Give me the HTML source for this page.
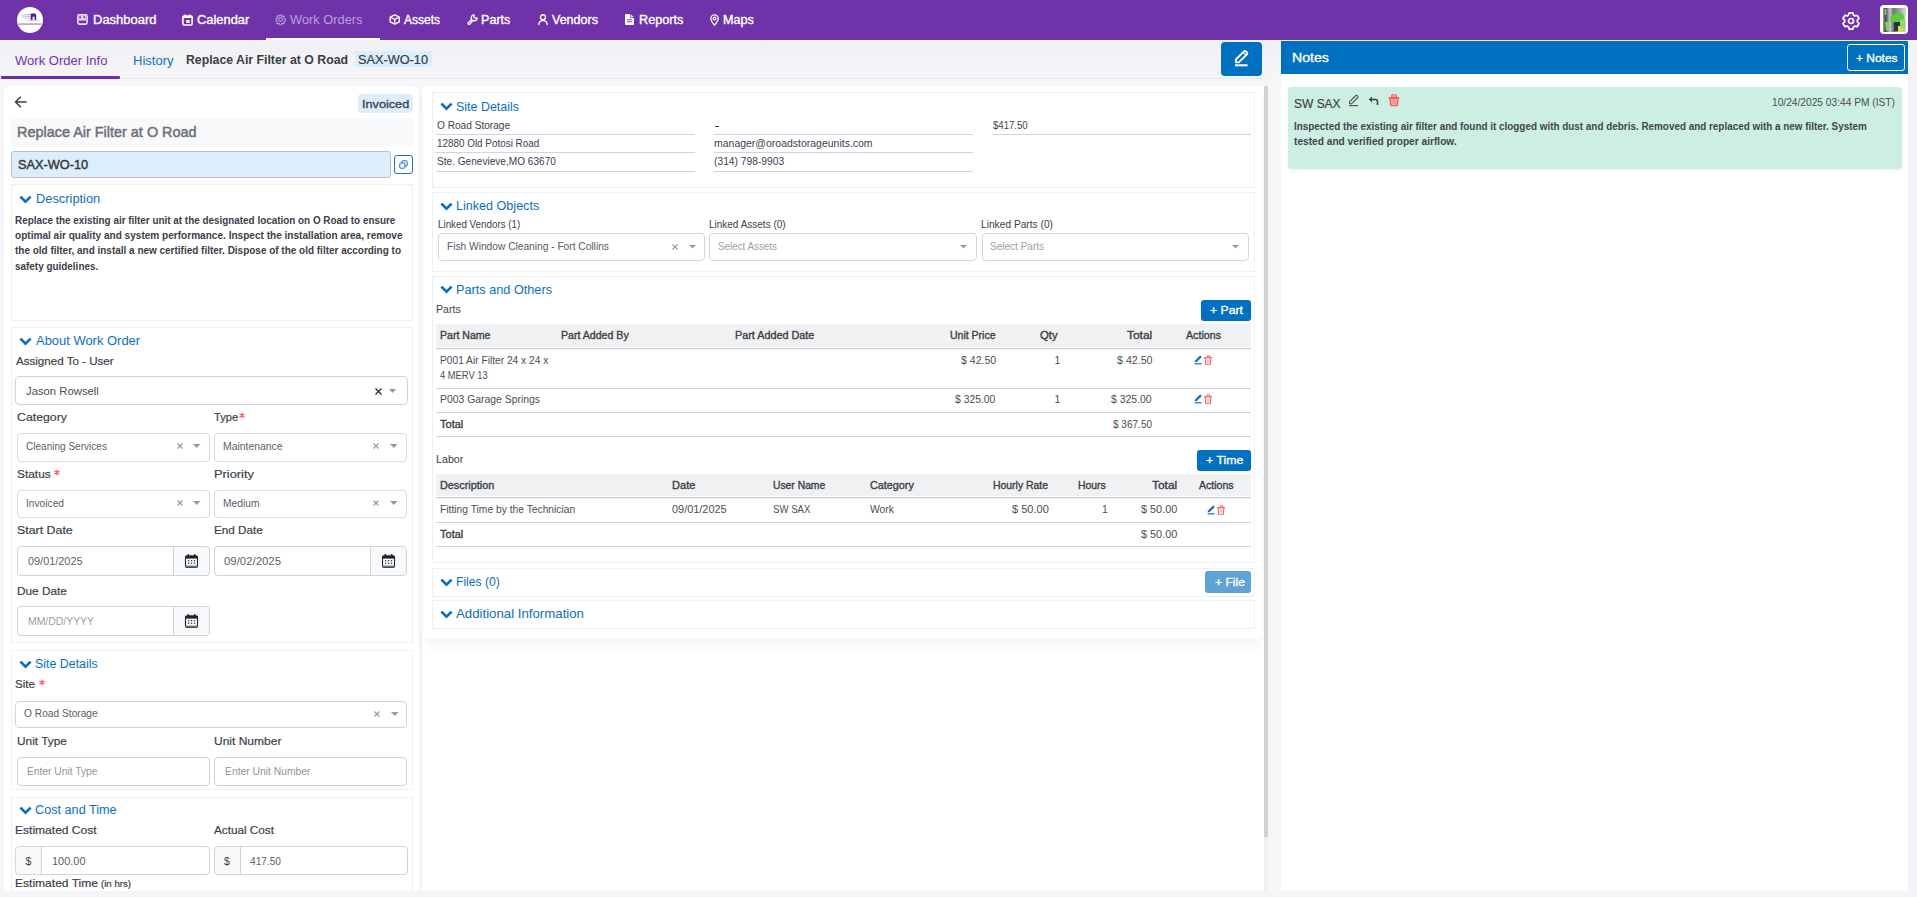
<!DOCTYPE html><html><head><meta charset="utf-8"><style>html,body{margin:0;padding:0;width:1917px;height:897px;overflow:hidden;}body{position:relative;background:#f4f4f8;font-family:"Liberation Sans",sans-serif;}svg{position:absolute;overflow:visible}</style></head><body><div style="position:absolute;left:0px;top:0px;width:1917px;height:40px;background:#6f32a9"></div>
<div style="position:absolute;left:0px;top:40px;width:1281px;height:851px;background:linear-gradient(#f0f0f4,#f6f6f9 40px,#f6f6f9)"></div>
<div style="position:absolute;left:120px;top:78px;width:1148px;height:1px;background:#e6ebf1"></div>
<div style="position:absolute;left:1px;top:76px;width:119px;height:3px;background:#6a2fb0;border-radius:1px"></div>
<div style="position:absolute;left:266px;top:38px;width:114px;height:2px;background:#ffffff"></div>
<div style="position:absolute;left:4px;top:86px;width:415px;height:805px;background:#fff;border-radius:6px 6px 0 0;box-shadow:0 0 2px rgba(0,0,0,0.03)"></div>
<div style="position:absolute;left:422px;top:86px;width:842px;height:805px;background:#fff"></div>
<div style="position:absolute;left:424px;top:86px;width:838px;height:553px;background:#fff;border-radius:0 0 4px 4px;box-shadow:0 8px 14px rgba(0,0,0,0.045)"></div>
<div style="position:absolute;left:1264px;top:86px;width:4px;height:805px;background:#f0f0f0"></div>
<div style="position:absolute;left:1264px;top:86px;width:4px;height:751px;background:#d1d1d1"></div>
<div style="position:absolute;left:1281px;top:41px;width:627px;height:850px;background:#fff"></div>
<div style="position:absolute;left:1281px;top:41px;width:627px;height:33px;background:#0070c0"></div>
<div style="position:absolute;left:1221px;top:42px;width:41px;height:34px;background:#0070c0;border-radius:4px"></div>
<div style="position:absolute;left:17px;top:7px;width:26px;height:26px;border-radius:50%;background:#fff"></div>
<svg style="left:17px;top:7px" width="26" height="26" viewBox="0 0 26 26"><path d="M4 8.3 Q9 7.2 15 7 L15 8 Q9 8.3 4 8.6 Z" fill="#7a5aa8" opacity="0.7"/><path d="M5 9.8 Q10 9.2 15 9.2 L15 10.1 Q10 10.2 5 10.2 Z" fill="#6a4a9c" opacity="0.7"/><path d="M6.5 11.3 Q11 11 15 11 L15 11.8 Q11 11.8 6.5 11.6 Z" fill="#8a7ab0" opacity="0.6"/><path d="M13.8 13 V7.5 Q13.8 6.6 14.8 6.6 H17.5 Q19.2 6.6 19.2 8.4 V13 H17.6 V9.8 H15.6 V13 Z" fill="#4b2192"/><path d="M10 13.6 Q16 13.2 22 13.8" stroke="#c8c8d0" stroke-width="0.8" fill="none"/><rect x="1.6" y="16.4" width="22.8" height="1.3" fill="#4a3570" opacity="0.55"/></svg>
<span style="position:absolute;white-space:nowrap;top:14px;font-size:12.5px;line-height:12.5px;color:#ffffff;left:92.50px;transform-origin:0 0;transform:scaleX(1.0389);-webkit-text-stroke:0.35px #ffffff;">Dashboard</span>
<span style="position:absolute;white-space:nowrap;top:14px;font-size:12.5px;line-height:12.5px;color:#ffffff;left:196.70px;transform-origin:0 0;transform:scaleX(1.0305);-webkit-text-stroke:0.35px #ffffff;">Calendar</span>
<span style="position:absolute;white-space:nowrap;top:14px;font-size:12.5px;line-height:12.5px;color:#b9a0dc;left:290.00px;transform-origin:0 0;transform:scaleX(1.0265);">Work Orders</span>
<span style="position:absolute;white-space:nowrap;top:14px;font-size:12.5px;line-height:12.5px;color:#ffffff;left:403.90px;transform-origin:0 0;transform:scaleX(0.9627);-webkit-text-stroke:0.35px #ffffff;">Assets</span>
<span style="position:absolute;white-space:nowrap;top:14px;font-size:12.5px;line-height:12.5px;color:#ffffff;left:480.90px;transform-origin:0 0;transform:scaleX(1.0073);-webkit-text-stroke:0.35px #ffffff;">Parts</span>
<span style="position:absolute;white-space:nowrap;top:14px;font-size:12.5px;line-height:12.5px;color:#ffffff;left:551.80px;transform-origin:0 0;transform:scaleX(1.0005);-webkit-text-stroke:0.35px #ffffff;">Vendors</span>
<span style="position:absolute;white-space:nowrap;top:14px;font-size:12.5px;line-height:12.5px;color:#ffffff;left:638.70px;transform-origin:0 0;transform:scaleX(1.0126);-webkit-text-stroke:0.35px #ffffff;">Reports</span>
<span style="position:absolute;white-space:nowrap;top:14px;font-size:12.5px;line-height:12.5px;color:#ffffff;left:723.40px;transform-origin:0 0;transform:scaleX(1.0078);-webkit-text-stroke:0.35px #ffffff;">Maps</span>
<svg style="left:77px;top:14px" width="11" height="11" viewBox="0 0 11 11"><rect x="0.9" y="0.9" width="9.2" height="9.2" rx="1.5" fill="none" stroke="#eee6f7" stroke-width="1.6"/><rect x="2" y="2" width="7" height="4.6" fill="#e0d6ee"/><rect x="2.3" y="2.2" width="1.6" height="2" fill="#6f32a9"/><rect x="6.6" y="2.2" width="1.6" height="2" fill="#6f32a9"/></svg>
<svg style="left:182px;top:13.5px" width="11" height="12" viewBox="0 0 11 12"><rect x="0.9" y="2" width="9.2" height="9" rx="1" fill="none" stroke="#fff" stroke-width="1.6"/><rect x="0.9" y="2" width="9.2" height="2" fill="#fff"/><rect x="2.6" y="0.5" width="1.4" height="2" fill="#fff"/><rect x="7" y="0.5" width="1.4" height="2" fill="#fff"/><rect x="4.3" y="6" width="3.3" height="3" fill="#fff"/></svg>
<svg style="left:275px;top:14px" width="11" height="11" viewBox="0 0 24 24"><path d="M12 8a4 4 0 1 0 0 8 4 4 0 0 0 0-8z" fill="none" stroke="#b9a0dc" stroke-width="2.4"/><path d="M10.3 2h3.4l.5 2.6 2 .9 2.2-1.5 2.4 2.4-1.5 2.2.9 2 2.6.5v3.4l-2.6.5-.9 2 1.5 2.2-2.4 2.4-2.2-1.5-2 .9-.5 2.6h-3.4l-.5-2.6-2-.9-2.2 1.5-2.4-2.4 1.5-2.2-.9-2L2 13.7v-3.4l2.6-.5.9-2L4 5.6 6.4 3.2l2.2 1.5 2-.9z" fill="none" stroke="#b9a0dc" stroke-width="2.2" stroke-linejoin="round"/></svg>
<svg style="left:388.5px;top:14px" width="11.5" height="11" viewBox="0 0 12 12"><path d="M6 0.9 L11 3.3 V8.7 L6 11.1 L1 8.7 V3.3 Z" fill="none" stroke="#fff" stroke-width="1.5" stroke-linejoin="round"/><path d="M1.3 3.5 L6 5.8 L10.7 3.5 M6 5.8 V11" fill="none" stroke="#fff" stroke-width="1.4"/></svg>
<svg style="left:466.5px;top:14px" width="11" height="11" viewBox="0 0 12 12"><path d="M7.8 0.9 A3.3 3.3 0 1 0 11.1 4.2 L8.9 4.6 L7.4 3.1 Z M5.2 5.9 L1.2 9.6 A1.2 1.2 0 0 0 2.9 11.2 L6.4 7.2" fill="none" stroke="#fff" stroke-width="1.4" stroke-linejoin="round"/></svg>
<svg style="left:537.5px;top:14px" width="10" height="11" viewBox="0 0 10 11"><circle cx="5" cy="3.3" r="2.5" fill="none" stroke="#fff" stroke-width="1.4"/><path d="M0.8 10.5 C1 7.5 3 6.6 5 6.6 C7 6.6 9 7.5 9.2 10.5" fill="none" stroke="#fff" stroke-width="1.4" stroke-linecap="round"/></svg>
<svg style="left:625px;top:14px" width="9" height="11" viewBox="0 0 9 11"><path d="M0 1 Q0 0 1 0 H5.5 L9 3.5 V10 Q9 11 8 11 H1 Q0 11 0 10 Z" fill="#fff"/><rect x="2" y="5.3" width="5" height="0.9" fill="#6f32a9"/><rect x="2" y="7.3" width="5" height="0.9" fill="#6f32a9"/><path d="M5.5 0 V3.5 H9" fill="none" stroke="#6f32a9" stroke-width="0.8"/></svg>
<svg style="left:710px;top:13.5px" width="9" height="12" viewBox="0 0 9 12"><path d="M4.5 11.2 C2 8.3 0.8 6.5 0.8 4.5 A3.7 3.7 0 0 1 8.2 4.5 C8.2 6.5 7 8.3 4.5 11.2 Z" fill="none" stroke="#fff" stroke-width="1.3"/><circle cx="4.5" cy="4.5" r="1.4" fill="none" stroke="#fff" stroke-width="1.2"/></svg>
<svg style="left:1841px;top:11px" width="20" height="20" viewBox="0 0 20 20"><path d="M8.17 1.80 L11.83 1.80 L12.43 4.08 L13.91 4.93 L16.18 4.31 L18.02 7.49 L16.34 9.15 L16.34 10.85 L18.02 12.51 L16.18 15.69 L13.91 15.07 L12.43 15.92 L11.83 18.20 L8.17 18.20 L7.57 15.92 L6.09 15.07 L3.82 15.69 L1.98 12.51 L3.66 10.85 L3.66 9.15 L1.98 7.49 L3.82 4.31 L6.09 4.93 L7.57 4.08 Z" fill="none" stroke="#fff" stroke-width="1.7" stroke-linejoin="round"/><circle cx="10" cy="10" r="2.5" fill="none" stroke="#fff" stroke-width="1.7"/></svg>
<div style="position:absolute;left:1880px;top:5px;width:28px;height:29px;background:#fff;border-radius:4px"></div>
<svg style="left:1882.5px;top:8px" width="23" height="24" viewBox="0 0 23 24"><defs><linearGradient id="av" x1="0" x2="1" y1="0" y2="0"><stop offset="0" stop-color="#9aa09c"/><stop offset="0.12" stop-color="#3f4542"/><stop offset="0.3" stop-color="#c9cdca"/><stop offset="0.45" stop-color="#6d7370"/><stop offset="0.7" stop-color="#9aa29b"/><stop offset="1" stop-color="#d7dad6"/></linearGradient></defs><rect width="23" height="24" fill="url(#av)"/><path d="M7 9 Q12 4 19 5 L21 8 L21 14 L8 15 Z" fill="#62c844"/><rect x="2" y="1" width="1.3" height="6" fill="#7ad65a"/><rect x="11" y="14" width="6" height="9" fill="#2f3431"/><rect x="15" y="18" width="5" height="6" fill="#d5df52"/><path d="M2 14 L6 13 L6 22 L3 23 Z" fill="#7ccc5e"/><path d="M17 12 L22 11 L22 21 L18 20 Z" fill="#8fd86e"/></svg>
<span style="position:absolute;white-space:nowrap;top:55px;font-size:12.0px;line-height:12.0px;color:#7232b8;left:14.60px;transform-origin:0 0;transform:scaleX(1.0853);">Work Order Info</span>
<span style="position:absolute;white-space:nowrap;top:55px;font-size:12.0px;line-height:12.0px;color:#0b72c4;left:132.50px;transform-origin:0 0;transform:scaleX(1.0852);">History</span>
<span style="position:absolute;white-space:nowrap;top:54px;font-size:12.0px;line-height:12.0px;color:#3a3d44;left:186.00px;transform-origin:0 0;transform:scaleX(1.0235);font-weight:bold;">Replace Air Filter at O Road</span>
<div style="position:absolute;left:355px;top:51px;width:77px;height:16px;background:#dcedfb;border-radius:3px"></div>
<span style="position:absolute;white-space:nowrap;top:54px;font-size:12.0px;line-height:12.0px;color:#3a3d44;left:358.00px;transform-origin:0 0;transform:scaleX(1.0606);-webkit-text-stroke:0.2px #3a3d44;">SAX-WO-10</span>
<svg style="left:1233px;top:49px" width="16" height="19" viewBox="0 0 16 19"><path d="M2.9 13.2 L2.9 10.5 L11 2.4 Q12 1.4 13 2.4 L13.9 3.3 Q14.9 4.3 13.9 5.3 L5.8 13.4 Z" fill="none" stroke="#fff" stroke-width="1.9" stroke-linejoin="round"/><path d="M10.3 3.4 L12.9 6" stroke="#fff" stroke-width="1.2"/><rect x="2" y="15.3" width="12.5" height="2" fill="#fff"/></svg>
<span style="position:absolute;white-space:nowrap;top:51px;font-size:13.0px;line-height:13.0px;color:#ffffff;left:1291.60px;transform-origin:0 0;transform:scaleX(1.0816);-webkit-text-stroke:0.35px #ffffff;">Notes</span>
<div style="position:absolute;left:1847px;top:44px;width:58px;height:27px;border:1px solid #fff;border-radius:3px;box-sizing:border-box"></div>
<span style="position:absolute;white-space:nowrap;top:52px;font-size:11.75px;line-height:11.75px;color:#ffffff;left:1856.00px;transform-origin:0 0;transform:scaleX(1.0164);-webkit-text-stroke:0.35px #ffffff;">+ Notes</span>
<div style="position:absolute;left:1288px;top:87px;width:614px;height:82px;background:#cdeee2;border-radius:4px;box-shadow:0 2px 4px rgba(0,0,0,0.06)"></div>
<span style="position:absolute;white-space:nowrap;top:98px;font-size:12.75px;line-height:12.75px;color:#3d424a;left:1294.00px;transform-origin:0 0;transform:scaleX(0.9396);-webkit-text-stroke:0.2px #3d424a;">SW SAX</span>
<span style="position:absolute;white-space:nowrap;top:97px;font-size:10.5px;line-height:10.5px;color:#4a4e55;left:1772.00px;transform-origin:0 0;transform:scaleX(0.9709);">10/24/2025 03:44 PM (IST)</span>
<span style="position:absolute;white-space:nowrap;top:122px;font-size:10.25px;line-height:10.25px;color:#41454c;left:1294.00px;transform-origin:0 0;transform:scaleX(0.9652);font-weight:bold;">Inspected the existing air filter and found it clogged with dust and debris. Removed and replaced with a new filter. System</span>
<span style="position:absolute;white-space:nowrap;top:137px;font-size:10.25px;line-height:10.25px;color:#41454c;left:1294.00px;transform-origin:0 0;transform:scaleX(0.9908);font-weight:bold;">tested and verified proper airflow.</span>
<svg style="left:1348px;top:94px" width="12" height="13" viewBox="0 0 12 13"><path d="M1.5 9.5 L1.5 7.8 L7.8 1.5 Q8.4 0.9 9 1.5 L9.8 2.3 Q10.4 2.9 9.8 3.5 L3.5 9.8 Z" fill="none" stroke="#555" stroke-width="1.1"/><rect x="1" y="11" width="9" height="1.2" fill="#555"/></svg>
<svg style="left:1368px;top:95px" width="11" height="11" viewBox="0 0 11 11"><path d="M9.5 10 V6.5 Q9.5 4.5 7.5 4.5 H2.5" fill="none" stroke="#3b3f46" stroke-width="1.6"/><path d="M0.8 4.5 L4 1.5 V7.5 Z" fill="#3b3f46"/></svg>
<svg style="left:1388.3px;top:93.6px" width="12" height="13" viewBox="0 0 12 13"><rect x="3.6" y="0.8" width="4.8" height="2.4" rx="1" fill="none" stroke="#f35e5e" stroke-width="1.2"/><path d="M1.9 4.3 L2.6 11 Q2.7 11.7 3.4 11.7 H8.6 Q9.3 11.7 9.4 11 L10.1 4.3 Z" fill="#f4a9a9" stroke="#f35e5e" stroke-width="1.3" stroke-linejoin="round"/><rect x="0.6" y="3.1" width="10.8" height="1.4" rx="0.5" fill="#f35e5e"/><path d="M5 5.8 V10 M7 5.8 V10" stroke="#ee7f7f" stroke-width="0.8"/></svg>
<svg style="left:14px;top:95.5px" width="13" height="12" viewBox="0 0 13 12"><path d="M12 6 H1.8 M6.3 1.2 L1.5 6 L6.3 10.8" fill="none" stroke="#3b3f46" stroke-width="1.6" stroke-linecap="round" stroke-linejoin="round"/></svg>
<div style="position:absolute;left:358px;top:94px;width:55px;height:19px;background:#dcedfb;border-radius:4px"></div>
<span style="position:absolute;white-space:nowrap;top:98px;font-size:11.75px;line-height:11.75px;color:#3d4450;left:361.80px;transform-origin:0 0;transform:scaleX(1.0784);-webkit-text-stroke:0.35px #3d4450;">Invoiced</span>
<div style="position:absolute;left:11px;top:118px;width:402px;height:28.5px;background:#f8f9fb;border-radius:4px"></div>
<span style="position:absolute;white-space:nowrap;top:125px;font-size:14.5px;line-height:14.5px;color:#6b6f76;left:17.40px;transform-origin:0 0;transform:scaleX(0.9949);-webkit-text-stroke:0.45px #6b6f76;">Replace Air Filter at O Road</span>
<div style="position:absolute;left:11px;top:151px;width:380px;height:27px;background:#dcedfb;border:1px solid #b9c1ca;border-radius:3px;box-sizing:border-box"></div>
<span style="position:absolute;white-space:nowrap;top:158px;font-size:13.0px;line-height:13.0px;color:#363a40;left:18.30px;transform-origin:0 0;transform:scaleX(0.9804);-webkit-text-stroke:0.45px #363a40;">SAX-WO-10</span>
<div style="position:absolute;left:394px;top:155px;width:19px;height:19px;background:#fff;border:1.3px solid #1b6fbf;border-radius:3px;box-sizing:border-box"></div>
<svg style="left:399px;top:159.5px" width="9" height="9" viewBox="0 0 9 9"><rect x="3" y="0.8" width="5.2" height="5.2" rx="0.8" fill="#fff" stroke="#1b6fbf" stroke-width="1"/><rect x="0.8" y="3" width="5.2" height="5.2" rx="0.8" fill="#fff" stroke="#1b6fbf" stroke-width="1"/></svg>
<div style="position:absolute;left:11px;top:184px;width:402px;height:137px;border:1px solid #edf0f5;box-sizing:border-box;background:#fff"></div>
<svg style="left:19.5px;top:195.5px" width="11" height="8" viewBox="0 0 11 8"><path d="M1.3 1.5 L5.5 5.6 L9.7 1.5" fill="none" stroke="#0b6fc1" stroke-width="2.6" stroke-linecap="square"/></svg>
<span style="position:absolute;white-space:nowrap;top:193px;font-size:12.0px;line-height:12.0px;color:#0b6fc1;left:35.50px;transform-origin:0 0;transform:scaleX(1.0700);">Description</span>
<span style="position:absolute;white-space:nowrap;top:216px;font-size:10.25px;line-height:10.25px;color:#3c4048;left:15.40px;transform-origin:0 0;transform:scaleX(0.9650);font-weight:bold;">Replace the existing air filter unit at the designated location on O Road to ensure</span>
<span style="position:absolute;white-space:nowrap;top:231px;font-size:10.25px;line-height:10.25px;color:#3c4048;left:15.40px;transform-origin:0 0;transform:scaleX(0.9818);font-weight:bold;">optimal air quality and system performance. Inspect the installation area, remove</span>
<span style="position:absolute;white-space:nowrap;top:246px;font-size:10.25px;line-height:10.25px;color:#3c4048;left:15.40px;transform-origin:0 0;transform:scaleX(0.9723);font-weight:bold;">the old filter, and install a new certified filter. Dispose of the old filter according to</span>
<span style="position:absolute;white-space:nowrap;top:262px;font-size:10.25px;line-height:10.25px;color:#3c4048;left:15.40px;transform-origin:0 0;transform:scaleX(0.9675);font-weight:bold;">safety guidelines.</span>
<div style="position:absolute;left:11px;top:327px;width:402px;height:316px;border:1px solid #edf0f5;box-sizing:border-box;background:#fff"></div>
<svg style="left:19.5px;top:338px" width="11" height="8" viewBox="0 0 11 8"><path d="M1.3 1.5 L5.5 5.6 L9.7 1.5" fill="none" stroke="#0b6fc1" stroke-width="2.6" stroke-linecap="square"/></svg>
<span style="position:absolute;white-space:nowrap;top:335px;font-size:12.0px;line-height:12.0px;color:#0b6fc1;left:35.90px;transform-origin:0 0;transform:scaleX(1.0790);">About Work Order</span>
<span style="position:absolute;white-space:nowrap;top:355px;font-size:11.75px;line-height:11.75px;color:#3a3f47;left:15.50px;transform-origin:0 0;transform:scaleX(0.9853);-webkit-text-stroke:0.2px #3a3f47;">Assigned To - User</span>
<div style="position:absolute;left:15px;top:376px;width:393px;height:29px;border:1px solid #cfd4dc;border-radius:4px;box-sizing:border-box;background:#fff"></div>
<span style="position:absolute;white-space:nowrap;top:385px;font-size:11.75px;line-height:11.75px;color:#4a4e55;left:26.00px;transform-origin:0 0;transform:scaleX(0.9613);">Jason Rowsell</span>
<svg style="left:375px;top:388px" width="7" height="7" viewBox="0 0 7 7"><path d="M0.5 0.5 L6.5 6.5 M6.5 0.5 L0.5 6.5" stroke="#333" stroke-width="1.4"/></svg>
<svg style="left:388.5px;top:389px" width="7" height="4" viewBox="0 0 7 4"><path d="M0 0 H7 L3.5 4 Z" fill="#999"/></svg>
<span style="position:absolute;white-space:nowrap;top:411px;font-size:11.75px;line-height:11.75px;color:#3a3f47;left:16.80px;transform-origin:0 0;transform:scaleX(1.0460);-webkit-text-stroke:0.2px #3a3f47;">Category</span>
<span style="position:absolute;white-space:nowrap;top:411px;font-size:11.75px;line-height:11.75px;color:#3a3f47;left:214.00px;transform-origin:0 0;transform:scaleX(0.9491);-webkit-text-stroke:0.2px #3a3f47;">Type</span>
<svg style="left:238.8px;top:412.2px" width="6" height="7" viewBox="0 0 6 7"><path d="M3 0.6 V6.4 M0.5 2 L5.5 5 M5.5 2 L0.5 5" stroke="#f05a5a" stroke-width="1.1"/></svg>
<div style="position:absolute;left:17px;top:433px;width:193px;height:29px;border:1px solid #dcdcdc;border-radius:4px;box-sizing:border-box;background:#fff"></div>
<span style="position:absolute;white-space:nowrap;top:441px;font-size:10.5px;line-height:10.5px;color:#5a5f66;left:25.50px;transform-origin:0 0;transform:scaleX(0.9559);">Cleaning Services</span>
<svg style="left:176.5px;top:443px" width="6" height="6" viewBox="0 0 6 6"><path d="M0.5 0.5 L5.5 5.5 M5.5 0.5 L0.5 5.5" stroke="#9a9a9a" stroke-width="1.2"/></svg>
<svg style="left:193.2px;top:444px" width="7.5" height="4" viewBox="0 0 7.5 4"><path d="M0 0 H7.5 L3.75 4 Z" fill="#999"/></svg>
<div style="position:absolute;left:213.5px;top:433px;width:193.5px;height:29px;border:1px solid #dcdcdc;border-radius:4px;box-sizing:border-box;background:#fff"></div>
<span style="position:absolute;white-space:nowrap;top:441px;font-size:10.5px;line-height:10.5px;color:#5a5f66;left:222.50px;transform-origin:0 0;transform:scaleX(0.9898);">Maintenance</span>
<svg style="left:373px;top:443px" width="6" height="6" viewBox="0 0 6 6"><path d="M0.5 0.5 L5.5 5.5 M5.5 0.5 L0.5 5.5" stroke="#9a9a9a" stroke-width="1.2"/></svg>
<svg style="left:389.5px;top:444px" width="7.5" height="4" viewBox="0 0 7.5 4"><path d="M0 0 H7.5 L3.75 4 Z" fill="#999"/></svg>
<span style="position:absolute;white-space:nowrap;top:468px;font-size:11.75px;line-height:11.75px;color:#3a3f47;left:16.80px;transform-origin:0 0;transform:scaleX(1.0117);-webkit-text-stroke:0.2px #3a3f47;">Status</span>
<svg style="left:53.7px;top:469px" width="6" height="7" viewBox="0 0 6 7"><path d="M3 0.6 V6.4 M0.5 2 L5.5 5 M5.5 2 L0.5 5" stroke="#f05a5a" stroke-width="1.1"/></svg>
<span style="position:absolute;white-space:nowrap;top:468px;font-size:11.75px;line-height:11.75px;color:#3a3f47;left:213.60px;transform-origin:0 0;transform:scaleX(1.0919);-webkit-text-stroke:0.2px #3a3f47;">Priority</span>
<div style="position:absolute;left:17px;top:489.5px;width:193px;height:28.5px;border:1px solid #dcdcdc;border-radius:4px;box-sizing:border-box;background:#fff"></div>
<span style="position:absolute;white-space:nowrap;top:498px;font-size:10.5px;line-height:10.5px;color:#5a5f66;left:25.50px;transform-origin:0 0;transform:scaleX(0.9716);">Invoiced</span>
<svg style="left:176.5px;top:500px" width="6" height="6" viewBox="0 0 6 6"><path d="M0.5 0.5 L5.5 5.5 M5.5 0.5 L0.5 5.5" stroke="#9a9a9a" stroke-width="1.2"/></svg>
<svg style="left:193.2px;top:500.5px" width="7.5" height="4" viewBox="0 0 7.5 4"><path d="M0 0 H7.5 L3.75 4 Z" fill="#999"/></svg>
<div style="position:absolute;left:213.5px;top:489.5px;width:193.5px;height:28.5px;border:1px solid #dcdcdc;border-radius:4px;box-sizing:border-box;background:#fff"></div>
<span style="position:absolute;white-space:nowrap;top:498px;font-size:10.5px;line-height:10.5px;color:#5a5f66;left:222.50px;transform-origin:0 0;transform:scaleX(0.9778);">Medium</span>
<svg style="left:373px;top:500px" width="6" height="6" viewBox="0 0 6 6"><path d="M0.5 0.5 L5.5 5.5 M5.5 0.5 L0.5 5.5" stroke="#9a9a9a" stroke-width="1.2"/></svg>
<svg style="left:389.5px;top:500.5px" width="7.5" height="4" viewBox="0 0 7.5 4"><path d="M0 0 H7.5 L3.75 4 Z" fill="#999"/></svg>
<span style="position:absolute;white-space:nowrap;top:524px;font-size:11.75px;line-height:11.75px;color:#3a3f47;left:16.80px;transform-origin:0 0;transform:scaleX(1.0534);-webkit-text-stroke:0.2px #3a3f47;">Start Date</span>
<span style="position:absolute;white-space:nowrap;top:524px;font-size:11.75px;line-height:11.75px;color:#3a3f47;left:213.60px;transform-origin:0 0;transform:scaleX(0.9980);-webkit-text-stroke:0.2px #3a3f47;">End Date</span>
<div style="position:absolute;left:17px;top:546px;width:157.3px;height:30px;border:1px solid #ced4da;border-radius:4px 0 0 4px;box-sizing:border-box;background:#fff"></div>
<div style="position:absolute;left:173.3px;top:546px;width:36.69999999999999px;height:30px;border:1px solid #ced4da;border-radius:0 4px 4px 0;box-sizing:border-box;background:#f8f9fa"></div>
<svg style="left:185px;top:554px" width="13" height="14" viewBox="0 0 13 14"><rect x="2.6" y="0" width="1.3" height="2.5" fill="#212529"/><rect x="9.1" y="0" width="1.3" height="2.5" fill="#212529"/><path d="M0.5 3.3 Q0.5 1.8 2 1.8 H11 Q12.5 1.8 12.5 3.3 V12.3 Q12.5 13.5 11 13.5 H2 Q0.5 13.5 0.5 12.3 Z" fill="none" stroke="#212529" stroke-width="1.1"/><rect x="0.5" y="2" width="12" height="2.6" fill="#212529"/><rect x="0.5" y="11.6" width="12" height="1.9" fill="#6c757d"/><g fill="#3d3f5c"><rect x="3" y="6" width="1.3" height="1.3"/><rect x="5.9" y="6" width="1.3" height="1.3"/><rect x="8.8" y="6" width="1.3" height="1.3"/><rect x="3" y="8.6" width="1.3" height="1.3"/><rect x="5.9" y="8.6" width="1.3" height="1.3"/><rect x="8.8" y="8.6" width="1.3" height="1.3"/></g></svg>
<span style="position:absolute;white-space:nowrap;top:556px;font-size:10.5px;line-height:10.5px;color:#5a5f66;left:27.50px;transform-origin:0 0;transform:scaleX(1.0371);">09/01/2025</span>
<div style="position:absolute;left:213.5px;top:546px;width:157.5px;height:30px;border:1px solid #ced4da;border-radius:4px 0 0 4px;box-sizing:border-box;background:#fff"></div>
<div style="position:absolute;left:370px;top:546px;width:37px;height:30px;border:1px solid #ced4da;border-radius:0 4px 4px 0;box-sizing:border-box;background:#f8f9fa"></div>
<svg style="left:382px;top:554px" width="13" height="14" viewBox="0 0 13 14"><rect x="2.6" y="0" width="1.3" height="2.5" fill="#212529"/><rect x="9.1" y="0" width="1.3" height="2.5" fill="#212529"/><path d="M0.5 3.3 Q0.5 1.8 2 1.8 H11 Q12.5 1.8 12.5 3.3 V12.3 Q12.5 13.5 11 13.5 H2 Q0.5 13.5 0.5 12.3 Z" fill="none" stroke="#212529" stroke-width="1.1"/><rect x="0.5" y="2" width="12" height="2.6" fill="#212529"/><rect x="0.5" y="11.6" width="12" height="1.9" fill="#6c757d"/><g fill="#3d3f5c"><rect x="3" y="6" width="1.3" height="1.3"/><rect x="5.9" y="6" width="1.3" height="1.3"/><rect x="8.8" y="6" width="1.3" height="1.3"/><rect x="3" y="8.6" width="1.3" height="1.3"/><rect x="5.9" y="8.6" width="1.3" height="1.3"/><rect x="8.8" y="8.6" width="1.3" height="1.3"/></g></svg>
<span style="position:absolute;white-space:nowrap;top:556px;font-size:10.5px;line-height:10.5px;color:#5a5f66;left:224.00px;transform-origin:0 0;transform:scaleX(1.0846);">09/02/2025</span>
<span style="position:absolute;white-space:nowrap;top:585px;font-size:11.75px;line-height:11.75px;color:#3a3f47;left:16.80px;transform-origin:0 0;transform:scaleX(1.0052);-webkit-text-stroke:0.2px #3a3f47;">Due Date</span>
<div style="position:absolute;left:17px;top:606px;width:157.3px;height:30px;border:1px solid #ced4da;border-radius:4px 0 0 4px;box-sizing:border-box;background:#fff"></div>
<div style="position:absolute;left:173.3px;top:606px;width:36.69999999999999px;height:30px;border:1px solid #ced4da;border-radius:0 4px 4px 0;box-sizing:border-box;background:#f8f9fa"></div>
<svg style="left:185px;top:614px" width="13" height="14" viewBox="0 0 13 14"><rect x="2.6" y="0" width="1.3" height="2.5" fill="#212529"/><rect x="9.1" y="0" width="1.3" height="2.5" fill="#212529"/><path d="M0.5 3.3 Q0.5 1.8 2 1.8 H11 Q12.5 1.8 12.5 3.3 V12.3 Q12.5 13.5 11 13.5 H2 Q0.5 13.5 0.5 12.3 Z" fill="none" stroke="#212529" stroke-width="1.1"/><rect x="0.5" y="2" width="12" height="2.6" fill="#212529"/><rect x="0.5" y="11.6" width="12" height="1.9" fill="#6c757d"/><g fill="#3d3f5c"><rect x="3" y="6" width="1.3" height="1.3"/><rect x="5.9" y="6" width="1.3" height="1.3"/><rect x="8.8" y="6" width="1.3" height="1.3"/><rect x="3" y="8.6" width="1.3" height="1.3"/><rect x="5.9" y="8.6" width="1.3" height="1.3"/><rect x="8.8" y="8.6" width="1.3" height="1.3"/></g></svg>
<span style="position:absolute;white-space:nowrap;top:616px;font-size:10.5px;line-height:10.5px;color:#9aa0a6;left:27.50px;transform-origin:0 0;transform:scaleX(0.9922);">MM/DD/YYYY</span>
<div style="position:absolute;left:11px;top:650px;width:402px;height:140px;border:1px solid #edf0f5;box-sizing:border-box;background:#fff"></div>
<svg style="left:19.5px;top:660.5px" width="11" height="8" viewBox="0 0 11 8"><path d="M1.3 1.5 L5.5 5.6 L9.7 1.5" fill="none" stroke="#0b6fc1" stroke-width="2.6" stroke-linecap="square"/></svg>
<span style="position:absolute;white-space:nowrap;top:658px;font-size:12.0px;line-height:12.0px;color:#0b6fc1;left:35.00px;transform-origin:0 0;transform:scaleX(1.0326);">Site Details</span>
<span style="position:absolute;white-space:nowrap;top:678px;font-size:11.75px;line-height:11.75px;color:#3a3f47;left:15.00px;transform-origin:0 0;transform:scaleX(0.9867);-webkit-text-stroke:0.2px #3a3f47;">Site</span>
<svg style="left:38.5px;top:679px" width="6" height="7" viewBox="0 0 6 7"><path d="M3 0.6 V6.4 M0.5 2 L5.5 5 M5.5 2 L0.5 5" stroke="#f05a5a" stroke-width="1.1"/></svg>
<div style="position:absolute;left:15.3px;top:700.5px;width:392.2px;height:27.0px;border:1px solid #cfd4dc;border-radius:4px;box-sizing:border-box;background:#fff"></div>
<span style="position:absolute;white-space:nowrap;top:708px;font-size:10.5px;line-height:10.5px;color:#5a5f66;left:24.00px;transform-origin:0 0;transform:scaleX(0.9715);">O Road Storage</span>
<svg style="left:374px;top:711px" width="6" height="6" viewBox="0 0 6 6"><path d="M0.5 0.5 L5.5 5.5 M5.5 0.5 L0.5 5.5" stroke="#9a9a9a" stroke-width="1.2"/></svg>
<svg style="left:391px;top:711.5px" width="7.5" height="4" viewBox="0 0 7.5 4"><path d="M0 0 H7.5 L3.75 4 Z" fill="#999"/></svg>
<span style="position:absolute;white-space:nowrap;top:735px;font-size:11.75px;line-height:11.75px;color:#3a3f47;left:16.80px;transform-origin:0 0;transform:scaleX(1.0099);-webkit-text-stroke:0.2px #3a3f47;">Unit Type</span>
<span style="position:absolute;white-space:nowrap;top:735px;font-size:11.75px;line-height:11.75px;color:#3a3f47;left:213.60px;transform-origin:0 0;transform:scaleX(1.0216);-webkit-text-stroke:0.2px #3a3f47;">Unit Number</span>
<div style="position:absolute;left:17px;top:756.5px;width:193px;height:29.0px;border:1px solid #ced4da;border-radius:4px;box-sizing:border-box;background:#fff"></div>
<span style="position:absolute;white-space:nowrap;top:766px;font-size:10.5px;line-height:10.5px;color:#8f959b;left:27.30px;transform-origin:0 0;transform:scaleX(0.9752);">Enter Unit Type</span>
<div style="position:absolute;left:213.5px;top:756.5px;width:193.5px;height:29.0px;border:1px solid #ced4da;border-radius:4px;box-sizing:border-box;background:#fff"></div>
<span style="position:absolute;white-space:nowrap;top:766px;font-size:10.5px;line-height:10.5px;color:#8f959b;left:224.50px;transform-origin:0 0;transform:scaleX(0.9834);">Enter Unit Number</span>
<div style="position:absolute;left:11px;top:797px;width:402px;height:98px;border:1px solid #edf0f5;box-sizing:border-box;background:#fff"></div>
<svg style="left:19.5px;top:807px" width="11" height="8" viewBox="0 0 11 8"><path d="M1.3 1.5 L5.5 5.6 L9.7 1.5" fill="none" stroke="#0b6fc1" stroke-width="2.6" stroke-linecap="square"/></svg>
<span style="position:absolute;white-space:nowrap;top:804px;font-size:12.0px;line-height:12.0px;color:#0b6fc1;left:35.00px;transform-origin:0 0;transform:scaleX(1.0551);">Cost and Time</span>
<span style="position:absolute;white-space:nowrap;top:824px;font-size:11.75px;line-height:11.75px;color:#3a3f47;left:15.00px;transform-origin:0 0;transform:scaleX(1.0243);-webkit-text-stroke:0.2px #3a3f47;">Estimated Cost</span>
<span style="position:absolute;white-space:nowrap;top:824px;font-size:11.75px;line-height:11.75px;color:#3a3f47;left:214.00px;transform-origin:0 0;transform:scaleX(0.9983);-webkit-text-stroke:0.2px #3a3f47;">Actual Cost</span>
<div style="position:absolute;left:15.3px;top:846px;width:26.7px;height:28.5px;background:#f8f9fa;border:1px solid #ced4da;border-radius:4px 0 0 4px;box-sizing:border-box"></div>
<div style="position:absolute;left:41px;top:846px;width:169px;height:28.5px;background:#fff;border:1px solid #ced4da;border-radius:0 4px 4px 0;box-sizing:border-box"></div>
<span style="position:absolute;white-space:nowrap;top:856px;font-size:10.5px;line-height:10.5px;color:#3b3f46;left:25.50px;letter-spacing:0.000px;">$</span>
<span style="position:absolute;white-space:nowrap;top:856px;font-size:10.5px;line-height:10.5px;color:#5a5f66;left:52.00px;transform-origin:0 0;transform:scaleX(1.0426);">100.00</span>
<div style="position:absolute;left:213.5px;top:846px;width:27.5px;height:28.5px;background:#f8f9fa;border:1px solid #ced4da;border-radius:4px 0 0 4px;box-sizing:border-box"></div>
<div style="position:absolute;left:240px;top:846px;width:167.5px;height:28.5px;background:#fff;border:1px solid #ced4da;border-radius:0 4px 4px 0;box-sizing:border-box"></div>
<span style="position:absolute;white-space:nowrap;top:856px;font-size:10.5px;line-height:10.5px;color:#3b3f46;left:224.00px;letter-spacing:0.000px;">$</span>
<span style="position:absolute;white-space:nowrap;top:856px;font-size:10.5px;line-height:10.5px;color:#5a5f66;left:250.00px;transform-origin:0 0;transform:scaleX(0.9648);">417.50</span>
<span style="position:absolute;white-space:nowrap;top:877px;font-size:11.75px;line-height:11.75px;color:#3a3f47;left:15.00px;transform-origin:0 0;transform:scaleX(1.0252);-webkit-text-stroke:0.2px #3a3f47;">Estimated Time</span>
<span style="position:absolute;white-space:nowrap;top:880px;font-size:8.5px;line-height:8.5px;color:#3a3f47;left:101.00px;transform-origin:0 0;transform:scaleX(1.1349);-webkit-text-stroke:0.2px #3a3f47;">(in hrs)</span>
<div style="position:absolute;left:0px;top:891px;width:1917px;height:6px;background:#f5f5f8"></div>
<div style="position:absolute;left:432px;top:92px;width:823px;height:96px;border:1px solid #edf0f5;box-sizing:border-box;background:#fff"></div>
<svg style="left:441px;top:102.5px" width="11" height="8" viewBox="0 0 11 8"><path d="M1.3 1.5 L5.5 5.6 L9.7 1.5" fill="none" stroke="#0b6fc1" stroke-width="2.6" stroke-linecap="square"/></svg>
<span style="position:absolute;white-space:nowrap;top:101px;font-size:12.25px;line-height:12.25px;color:#0b6fc1;left:456.30px;transform-origin:0 0;transform:scaleX(1.0164);">Site Details</span>
<span style="position:absolute;white-space:nowrap;top:120px;font-size:10.5px;line-height:10.5px;color:#3d4148;left:437.20px;transform-origin:0 0;transform:scaleX(0.9636);">O Road Storage</span>
<span style="position:absolute;white-space:nowrap;top:138px;font-size:10.5px;line-height:10.5px;color:#3d4148;left:437.20px;transform-origin:0 0;transform:scaleX(0.9413);">12880 Old Potosi Road</span>
<span style="position:absolute;white-space:nowrap;top:156px;font-size:10.5px;line-height:10.5px;color:#3d4148;left:437.20px;transform-origin:0 0;transform:scaleX(0.9609);">Ste. Genevieve,MO 63670</span>
<div style="position:absolute;left:436px;top:134px;width:259px;height:1px;background:#d9cdef"></div>
<div style="position:absolute;left:436px;top:152px;width:259px;height:1px;background:#d9cdef"></div>
<div style="position:absolute;left:436px;top:171px;width:259px;height:1px;background:#d9cdef"></div>
<div style="position:absolute;left:715px;top:126px;width:4px;height:1.2000000000000028px;background:#3d4148"></div>
<span style="position:absolute;white-space:nowrap;top:138px;font-size:10.5px;line-height:10.5px;color:#3d4148;left:714.00px;transform-origin:0 0;transform:scaleX(0.9980);">manager@oroadstorageunits.com</span>
<span style="position:absolute;white-space:nowrap;top:156px;font-size:10.5px;line-height:10.5px;color:#3d4148;left:714.00px;transform-origin:0 0;transform:scaleX(0.9774);">(314) 798-9903</span>
<div style="position:absolute;left:714px;top:134px;width:259px;height:1px;background:#d9cdef"></div>
<div style="position:absolute;left:714px;top:152px;width:259px;height:1px;background:#d9cdef"></div>
<div style="position:absolute;left:714px;top:171px;width:259px;height:1px;background:#d9cdef"></div>
<span style="position:absolute;white-space:nowrap;top:120px;font-size:10.5px;line-height:10.5px;color:#3d4148;left:993.30px;transform-origin:0 0;transform:scaleX(0.9142);">$417.50</span>
<div style="position:absolute;left:992px;top:134px;width:259px;height:1px;background:#d9cdef"></div>
<div style="position:absolute;left:432px;top:192px;width:823px;height:80px;border:1px solid #edf0f5;box-sizing:border-box;background:#fff"></div>
<svg style="left:441px;top:202.5px" width="11" height="8" viewBox="0 0 11 8"><path d="M1.3 1.5 L5.5 5.6 L9.7 1.5" fill="none" stroke="#0b6fc1" stroke-width="2.6" stroke-linecap="square"/></svg>
<span style="position:absolute;white-space:nowrap;top:200px;font-size:12.25px;line-height:12.25px;color:#0b6fc1;left:456.30px;transform-origin:0 0;transform:scaleX(1.0267);">Linked Objects</span>
<span style="position:absolute;white-space:nowrap;top:219px;font-size:10.5px;line-height:10.5px;color:#3d4148;left:437.70px;transform-origin:0 0;transform:scaleX(0.9337);">Linked Vendors (1)</span>
<span style="position:absolute;white-space:nowrap;top:219px;font-size:10.5px;line-height:10.5px;color:#3d4148;left:709.40px;transform-origin:0 0;transform:scaleX(0.9511);">Linked Assets (0)</span>
<span style="position:absolute;white-space:nowrap;top:219px;font-size:10.5px;line-height:10.5px;color:#3d4148;left:981.00px;transform-origin:0 0;transform:scaleX(0.9713);">Linked Parts (0)</span>
<div style="position:absolute;left:438.4px;top:232.5px;width:267.1px;height:28.5px;border:1px solid #d6d6d6;border-radius:4px;box-sizing:border-box;background:#fff"></div>
<span style="position:absolute;white-space:nowrap;top:241px;font-size:10.5px;line-height:10.5px;color:#555a61;left:446.50px;transform-origin:0 0;transform:scaleX(0.9701);">Fish Window Cleaning - Fort Collins</span>
<svg style="left:671.5px;top:243.5px" width="6" height="6" viewBox="0 0 6 6"><path d="M0.5 0.5 L5.5 5.5 M5.5 0.5 L0.5 5.5" stroke="#9a9a9a" stroke-width="1.1"/></svg>
<svg style="left:688.5px;top:244.5px" width="7" height="3.5" viewBox="0 0 7 3.5"><path d="M0 0 H7 L3.5 3.5 Z" fill="#999"/></svg>
<div style="position:absolute;left:709.4px;top:232.5px;width:267.20000000000005px;height:28.5px;border:1px solid #d6d6d6;border-radius:4px;box-sizing:border-box;background:#fff"></div>
<span style="position:absolute;white-space:nowrap;top:241px;font-size:10.5px;line-height:10.5px;color:#9ba0a6;left:718.00px;transform-origin:0 0;transform:scaleX(0.9357);">Select Assets</span>
<svg style="left:959.5px;top:244.5px" width="7" height="3.5" viewBox="0 0 7 3.5"><path d="M0 0 H7 L3.5 3.5 Z" fill="#999"/></svg>
<div style="position:absolute;left:981.5px;top:232.5px;width:267.0px;height:28.5px;border:1px solid #d6d6d6;border-radius:4px;box-sizing:border-box;background:#fff"></div>
<span style="position:absolute;white-space:nowrap;top:241px;font-size:10.5px;line-height:10.5px;color:#9ba0a6;left:990.00px;transform-origin:0 0;transform:scaleX(0.9541);">Select Parts</span>
<svg style="left:1231.5px;top:244.5px" width="7" height="3.5" viewBox="0 0 7 3.5"><path d="M0 0 H7 L3.5 3.5 Z" fill="#999"/></svg>
<div style="position:absolute;left:432px;top:275.5px;width:823px;height:287.5px;border:1px solid #edf0f5;box-sizing:border-box;background:#fff"></div>
<svg style="left:441px;top:285.5px" width="11" height="8" viewBox="0 0 11 8"><path d="M1.3 1.5 L5.5 5.6 L9.7 1.5" fill="none" stroke="#0b6fc1" stroke-width="2.6" stroke-linecap="square"/></svg>
<span style="position:absolute;white-space:nowrap;top:284px;font-size:12.25px;line-height:12.25px;color:#0b6fc1;left:456.30px;transform-origin:0 0;transform:scaleX(1.0366);">Parts and Others</span>
<span style="position:absolute;white-space:nowrap;top:304px;font-size:10.5px;line-height:10.5px;color:#3d4148;left:436.00px;transform-origin:0 0;transform:scaleX(1.0115);">Parts</span>
<div style="position:absolute;left:1201px;top:299.7px;width:50px;height:21.30000000000001px;background:#0070c0;border-radius:3px"></div>
<span style="position:absolute;white-space:nowrap;top:304px;font-size:11.75px;line-height:11.75px;color:#fff;left:1210.00px;transform-origin:0 0;transform:scaleX(1.0421);-webkit-text-stroke:0.35px #fff;">+ Part</span>
<div style="position:absolute;left:435.7px;top:324px;width:815.3px;height:23px;background:#f0f1f3"></div>
<div style="position:absolute;left:435.7px;top:347.5px;width:815.3px;height:1.5px;background:#c6cad0;box-shadow:0 1px 2px rgba(0,0,0,0.06)"></div>
<span style="position:absolute;white-space:nowrap;top:330px;font-size:10.5px;line-height:10.5px;color:#3b3f46;left:440.20px;transform-origin:0 0;transform:scaleX(1.0062);-webkit-text-stroke:0.35px #3b3f46;">Part Name</span>
<span style="position:absolute;white-space:nowrap;top:330px;font-size:10.5px;line-height:10.5px;color:#3b3f46;left:561.30px;transform-origin:0 0;transform:scaleX(1.0082);-webkit-text-stroke:0.35px #3b3f46;">Part Added By</span>
<span style="position:absolute;white-space:nowrap;top:330px;font-size:10.5px;line-height:10.5px;color:#3b3f46;left:735.20px;transform-origin:0 0;transform:scaleX(1.0276);-webkit-text-stroke:0.35px #3b3f46;">Part Added Date</span>
<span style="position:absolute;white-space:nowrap;top:330px;font-size:10.5px;line-height:10.5px;color:#3b3f46;left:950.30px;transform-origin:0 0;transform:scaleX(0.9996);-webkit-text-stroke:0.35px #3b3f46;">Unit Price</span>
<span style="position:absolute;white-space:nowrap;top:330px;font-size:10.5px;line-height:10.5px;color:#3b3f46;left:1040.00px;transform-origin:0 0;transform:scaleX(1.0841);-webkit-text-stroke:0.35px #3b3f46;">Qty</span>
<span style="position:absolute;white-space:nowrap;top:330px;font-size:10.5px;line-height:10.5px;color:#3b3f46;left:1127.00px;transform-origin:0 0;transform:scaleX(1.1374);-webkit-text-stroke:0.35px #3b3f46;">Total</span>
<span style="position:absolute;white-space:nowrap;top:330px;font-size:10.5px;line-height:10.5px;color:#3b3f46;left:1185.80px;transform-origin:0 0;transform:scaleX(1.0163);-webkit-text-stroke:0.35px #3b3f46;">Actions</span>
<span style="position:absolute;white-space:nowrap;top:355px;font-size:10.5px;line-height:10.5px;color:#4a4e55;left:440.00px;transform-origin:0 0;transform:scaleX(0.9717);">P001 Air Filter 24 x 24 x</span>
<span style="position:absolute;white-space:nowrap;top:370px;font-size:10.5px;line-height:10.5px;color:#4a4e55;left:440.00px;transform-origin:0 0;transform:scaleX(0.8916);">4 MERV 13</span>
<span style="position:absolute;white-space:nowrap;top:355px;font-size:10.5px;line-height:10.5px;color:#4a4e55;left:960.60px;transform-origin:0 0;transform:scaleX(1.0052);">$ 42.50</span>
<span style="position:absolute;white-space:nowrap;top:355px;font-size:10.5px;line-height:10.5px;color:#4a4e55;left:1054.60px;letter-spacing:0.000px;">1</span>
<span style="position:absolute;white-space:nowrap;top:355px;font-size:10.5px;line-height:10.5px;color:#4a4e55;left:1116.50px;transform-origin:0 0;transform:scaleX(1.0138);">$ 42.50</span>
<div style="position:absolute;left:435.7px;top:388px;width:815.3px;height:1.3000000000000114px;background:#cfd3d8"></div>
<span style="position:absolute;white-space:nowrap;top:394px;font-size:10.5px;line-height:10.5px;color:#4a4e55;left:440.00px;transform-origin:0 0;transform:scaleX(0.9900);">P003 Garage Springs</span>
<span style="position:absolute;white-space:nowrap;top:394px;font-size:10.5px;line-height:10.5px;color:#4a4e55;left:955.40px;transform-origin:0 0;transform:scaleX(0.9878);">$ 325.00</span>
<span style="position:absolute;white-space:nowrap;top:394px;font-size:10.5px;line-height:10.5px;color:#4a4e55;left:1054.60px;letter-spacing:0.000px;">1</span>
<span style="position:absolute;white-space:nowrap;top:394px;font-size:10.5px;line-height:10.5px;color:#4a4e55;left:1111.30px;transform-origin:0 0;transform:scaleX(0.9952);">$ 325.00</span>
<div style="position:absolute;left:435.7px;top:412px;width:815.3px;height:1.3000000000000114px;background:#cfd3d8"></div>
<span style="position:absolute;white-space:nowrap;top:419px;font-size:10.5px;line-height:10.5px;color:#3b3f46;left:440.00px;transform-origin:0 0;transform:scaleX(1.0517);-webkit-text-stroke:0.35px #3b3f46;">Total</span>
<span style="position:absolute;white-space:nowrap;top:419px;font-size:10.5px;line-height:10.5px;color:#4a4e55;left:1112.90px;transform-origin:0 0;transform:scaleX(0.9560);">$ 367.50</span>
<div style="position:absolute;left:435.7px;top:436px;width:815.3px;height:1.3000000000000114px;background:#cfd3d8"></div>
<svg style="left:1193px;top:354px" width="20" height="12" viewBox="0 0 20 12"><path d="M2.9 7.3 L7.3 2.9" stroke="#1a6fc4" stroke-width="2.3" stroke-linecap="round"/><rect x="1.6" y="9.2" width="7" height="1.2" fill="#1a6fc4"/><rect x="11" y="3.1" width="8" height="1.3" fill="#f06565"/><path d="M14.2 3.2 V1.8 H16.8 V3.2" fill="none" stroke="#f06565" stroke-width="1"/><path d="M12.2 4.2 L12.6 10.2 H17.4 L17.8 4.2" fill="none" stroke="#f06565" stroke-width="1.1"/><path d="M14.3 5.6 V8.8 M15.8 5.6 V8.8" stroke="#f49090" stroke-width="0.8"/></svg>
<svg style="left:1193px;top:393px" width="20" height="12" viewBox="0 0 20 12"><path d="M2.9 7.3 L7.3 2.9" stroke="#1a6fc4" stroke-width="2.3" stroke-linecap="round"/><rect x="1.6" y="9.2" width="7" height="1.2" fill="#1a6fc4"/><rect x="11" y="3.1" width="8" height="1.3" fill="#f06565"/><path d="M14.2 3.2 V1.8 H16.8 V3.2" fill="none" stroke="#f06565" stroke-width="1"/><path d="M12.2 4.2 L12.6 10.2 H17.4 L17.8 4.2" fill="none" stroke="#f06565" stroke-width="1.1"/><path d="M14.3 5.6 V8.8 M15.8 5.6 V8.8" stroke="#f49090" stroke-width="0.8"/></svg>
<span style="position:absolute;white-space:nowrap;top:454px;font-size:10.5px;line-height:10.5px;color:#3d4148;left:436.40px;transform-origin:0 0;transform:scaleX(1.0193);">Labor</span>
<div style="position:absolute;left:1197px;top:449.8px;width:54px;height:21.19999999999999px;background:#0070c0;border-radius:3px"></div>
<span style="position:absolute;white-space:nowrap;top:454px;font-size:11.75px;line-height:11.75px;color:#fff;left:1206.00px;transform-origin:0 0;transform:scaleX(1.0477);-webkit-text-stroke:0.35px #fff;">+ Time</span>
<div style="position:absolute;left:436px;top:474px;width:815px;height:22px;background:#f0f1f3"></div>
<div style="position:absolute;left:436px;top:496.5px;width:815px;height:1.5px;background:#c6cad0;box-shadow:0 1px 2px rgba(0,0,0,0.06)"></div>
<span style="position:absolute;white-space:nowrap;top:480px;font-size:10.5px;line-height:10.5px;color:#3b3f46;left:440.00px;transform-origin:0 0;transform:scaleX(1.0324);-webkit-text-stroke:0.35px #3b3f46;">Description</span>
<span style="position:absolute;white-space:nowrap;top:480px;font-size:10.5px;line-height:10.5px;color:#3b3f46;left:671.60px;transform-origin:0 0;transform:scaleX(1.0562);-webkit-text-stroke:0.35px #3b3f46;">Date</span>
<span style="position:absolute;white-space:nowrap;top:480px;font-size:10.5px;line-height:10.5px;color:#3b3f46;left:772.80px;transform-origin:0 0;transform:scaleX(0.9835);-webkit-text-stroke:0.35px #3b3f46;">User Name</span>
<span style="position:absolute;white-space:nowrap;top:480px;font-size:10.5px;line-height:10.5px;color:#3b3f46;left:869.90px;transform-origin:0 0;transform:scaleX(1.0274);-webkit-text-stroke:0.35px #3b3f46;">Category</span>
<span style="position:absolute;white-space:nowrap;top:480px;font-size:10.5px;line-height:10.5px;color:#3b3f46;left:993.30px;transform-origin:0 0;transform:scaleX(0.9921);-webkit-text-stroke:0.35px #3b3f46;">Hourly Rate</span>
<span style="position:absolute;white-space:nowrap;top:480px;font-size:10.5px;line-height:10.5px;color:#3b3f46;left:1077.80px;transform-origin:0 0;transform:scaleX(0.9916);-webkit-text-stroke:0.35px #3b3f46;">Hours</span>
<span style="position:absolute;white-space:nowrap;top:480px;font-size:10.5px;line-height:10.5px;color:#3b3f46;left:1152.00px;transform-origin:0 0;transform:scaleX(1.1374);-webkit-text-stroke:0.35px #3b3f46;">Total</span>
<span style="position:absolute;white-space:nowrap;top:480px;font-size:10.5px;line-height:10.5px;color:#3b3f46;left:1198.80px;transform-origin:0 0;transform:scaleX(1.0046);-webkit-text-stroke:0.35px #3b3f46;">Actions</span>
<span style="position:absolute;white-space:nowrap;top:504px;font-size:10.5px;line-height:10.5px;color:#4a4e55;left:440.00px;transform-origin:0 0;transform:scaleX(0.9788);">Fitting Time by the Technician</span>
<span style="position:absolute;white-space:nowrap;top:504px;font-size:10.5px;line-height:10.5px;color:#4a4e55;left:671.60px;transform-origin:0 0;transform:scaleX(1.0390);">09/01/2025</span>
<span style="position:absolute;white-space:nowrap;top:504px;font-size:10.5px;line-height:10.5px;color:#4a4e55;left:772.80px;transform-origin:0 0;transform:scaleX(0.9157);">SW SAX</span>
<span style="position:absolute;white-space:nowrap;top:504px;font-size:10.5px;line-height:10.5px;color:#4a4e55;left:870.00px;transform-origin:0 0;transform:scaleX(0.9852);">Work</span>
<span style="position:absolute;white-space:nowrap;top:504px;font-size:10.5px;line-height:10.5px;color:#4a4e55;left:1011.50px;transform-origin:0 0;transform:scaleX(1.0509);">$ 50.00</span>
<span style="position:absolute;white-space:nowrap;top:504px;font-size:10.5px;line-height:10.5px;color:#4a4e55;left:1102.00px;letter-spacing:0.000px;">1</span>
<span style="position:absolute;white-space:nowrap;top:504px;font-size:10.5px;line-height:10.5px;color:#4a4e55;left:1141.00px;transform-origin:0 0;transform:scaleX(1.0338);">$ 50.00</span>
<svg style="left:1205.5px;top:503.5px" width="20" height="12" viewBox="0 0 20 12"><path d="M2.9 7.3 L7.3 2.9" stroke="#1a6fc4" stroke-width="2.3" stroke-linecap="round"/><rect x="1.6" y="9.2" width="7" height="1.2" fill="#1a6fc4"/><rect x="11" y="3.1" width="8" height="1.3" fill="#f06565"/><path d="M14.2 3.2 V1.8 H16.8 V3.2" fill="none" stroke="#f06565" stroke-width="1"/><path d="M12.2 4.2 L12.6 10.2 H17.4 L17.8 4.2" fill="none" stroke="#f06565" stroke-width="1.1"/><path d="M14.3 5.6 V8.8 M15.8 5.6 V8.8" stroke="#f49090" stroke-width="0.8"/></svg>
<div style="position:absolute;left:436px;top:522px;width:815px;height:1.2999999999999545px;background:#cfd3d8"></div>
<span style="position:absolute;white-space:nowrap;top:529px;font-size:10.5px;line-height:10.5px;color:#3b3f46;left:440.00px;transform-origin:0 0;transform:scaleX(1.0517);-webkit-text-stroke:0.35px #3b3f46;">Total</span>
<span style="position:absolute;white-space:nowrap;top:529px;font-size:10.5px;line-height:10.5px;color:#4a4e55;left:1141.00px;transform-origin:0 0;transform:scaleX(1.0338);">$ 50.00</span>
<div style="position:absolute;left:436px;top:546px;width:815px;height:1.2999999999999545px;background:#cfd3d8"></div>
<div style="position:absolute;left:432px;top:567.5px;width:823px;height:29.5px;border:1px solid #edf0f5;box-sizing:border-box;background:#fff"></div>
<svg style="left:441px;top:578.5px" width="11" height="8" viewBox="0 0 11 8"><path d="M1.3 1.5 L5.5 5.6 L9.7 1.5" fill="none" stroke="#0b6fc1" stroke-width="2.6" stroke-linecap="square"/></svg>
<span style="position:absolute;white-space:nowrap;top:576px;font-size:12.25px;line-height:12.25px;color:#0b6fc1;left:456.30px;transform-origin:0 0;transform:scaleX(0.9882);">Files (0)</span>
<div style="position:absolute;left:1205px;top:571px;width:46px;height:22px;background:#5ea3d8;border-radius:3px"></div>
<span style="position:absolute;white-space:nowrap;top:576px;font-size:11.75px;line-height:11.75px;color:#fff;left:1214.50px;transform-origin:0 0;transform:scaleX(1.0316);-webkit-text-stroke:0.35px #fff;">+ File</span>
<div style="position:absolute;left:432px;top:600px;width:823px;height:29px;border:1px solid #edf0f5;box-sizing:border-box;background:#fff"></div>
<svg style="left:441px;top:611px" width="11" height="8" viewBox="0 0 11 8"><path d="M1.3 1.5 L5.5 5.6 L9.7 1.5" fill="none" stroke="#0b6fc1" stroke-width="2.6" stroke-linecap="square"/></svg>
<span style="position:absolute;white-space:nowrap;top:608px;font-size:12.25px;line-height:12.25px;color:#0b6fc1;left:456.30px;transform-origin:0 0;transform:scaleX(1.0800);">Additional Information</span></body></html>
